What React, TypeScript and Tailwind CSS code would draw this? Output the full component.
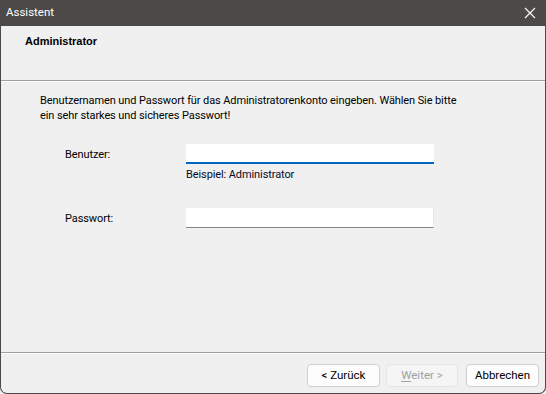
export default function App() {
  return (
    <div className="h-[394px] w-[546px] bg-[#f0f0f0] font-['Roboto',sans-serif] text-[11px] tracking-[-0.1px]">
      <div className="flex h-full flex-col overflow-hidden rounded-b-[7px] border-x border-b border-[#4b4a48] bg-[#f0f0f0]">
        {/* title bar */}
        <div className="-mx-px flex h-[26px] shrink-0 items-center justify-between bg-[#4b4a48] pl-[6px] pr-[10px] text-[11.5px] tracking-normal text-white">
          <span>Assistent</span>
          <svg width="12" height="12" viewBox="0 0 12 12">
            <path d="M1 1 L11 11 M11 1 L1 11" stroke="white" strokeWidth="1.1" />
          </svg>
        </div>

        {/* header */}
        <div className="h-[55px] shrink-0 border-b border-[#a0a0a0] pl-[24px] pt-[7px]">
          <h1 className="font-['Liberation_Sans'] text-[11px] font-bold leading-[16px] tracking-normal text-black">Administrator</h1>
        </div>
        <div className="h-px shrink-0 bg-white" />

        {/* body */}
        <div className="flex-1 pl-[39px] pt-[11px] leading-[15px] text-black">
          <p>
            Benutzernamen und Passwort für das Administratorenkonto eingeben. Wählen Sie bitte
            <br />
            ein sehr starkes und sicheres Passwort!
          </p>

          <div className="mt-[21px] grid grid-cols-[146px_248px] items-center">
            <label className="pl-[25px]">Benutzer:</label>
            <div className="h-[20px] border-b-2 border-[#0067c0] bg-white" />
            <div />
            <div className="mt-[3px] text-[#0a0a1e]">Beispiel: Administrator</div>
          </div>

          <div className="mt-[26px] grid grid-cols-[146px_248px] items-center">
            <label className="pl-[25px]">Passwort:</label>
            <div className="h-[20px] border-b border-r border-[#868686] border-r-[#e6e6e6] bg-white" />
          </div>
        </div>

        {/* footer */}
        <div className="h-px shrink-0 bg-[#a0a0a0]" />
        <div className="h-px shrink-0 bg-white" />
        <div className="flex h-[39px] shrink-0 items-start justify-end pr-[6px] pt-[10px] text-[11.5px] tracking-normal">
          <button className="h-[23px] w-[73px] rounded-[4px] border border-[#d0d0d0] bg-[#fdfdfd] text-black">&lt; Zurück</button>
          <button className="ml-[6px] h-[23px] w-[72px] rounded-[4px] border border-[#e5e5e5] bg-[#f5f5f5] text-[#a0a0a0]">
            <span className="underline underline-offset-2">W</span>eiter &gt;
          </button>
          <button className="ml-[8px] h-[23px] w-[73px] rounded-[4px] border border-[#d0d0d0] bg-[#fdfdfd] text-black">Abbrechen</button>
        </div>
      </div>
    </div>
  );
}
